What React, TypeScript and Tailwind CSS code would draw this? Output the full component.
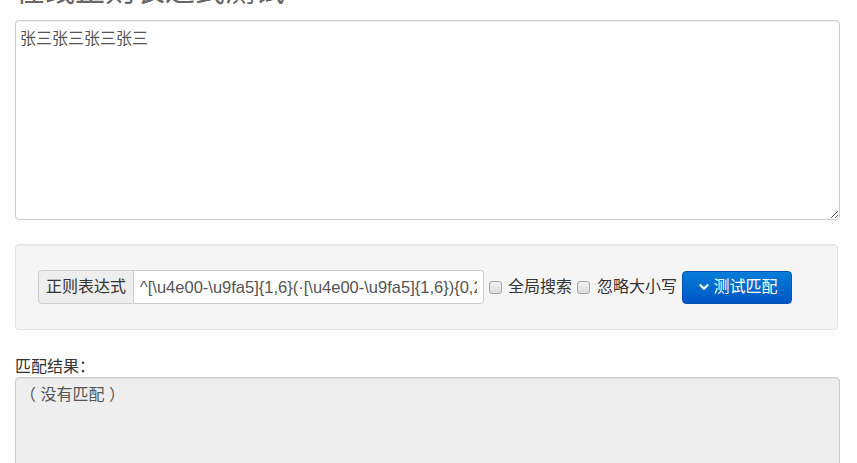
import { ChevronDown } from "lucide-react";

const FONT = "font-['Liberation_Sans','Noto_Sans_CJK_SC',sans-serif]";
const REGEX = "^[\\u4e00-\\u9fa5]{1,6}(·[\\u4e00-\\u9fa5]{1,6}){0,2}$";

function FakeCheckbox() {
  return (
    <span className="inline-block h-[13px] w-[13px] shrink-0 rounded-[3px] border border-[#a3a3a3] bg-gradient-to-b from-[#f0f0f0] to-[#dcdcdc]" />
  );
}

export default function App() {
  return (
    <div className={`${FONT} min-h-screen bg-white px-[15px] text-[16px] text-[#333]`}>
      <h1 className="-mt-[26px] text-[30px] leading-[33px] font-normal text-[#666]">
        在线正则表达式测试
      </h1>

      <textarea
        className="mt-[13px] block h-[200px] w-[825px] rounded-[4px] border border-[#ccc] bg-white px-[4px] pt-[7px] text-[16px] leading-[22px] text-[#555] shadow-[inset_0_1px_1px_rgba(0,0,0,0.075)] outline-none"
        defaultValue="张三张三张三张三"
      />

      <div className="mt-[24px] flex h-[86px] w-[823px] items-center rounded-[4px] border border-[#e3e3e3] bg-[#f5f5f5] pl-[22px] shadow-[inset_0_1px_1px_rgba(0,0,0,0.05)]">
        <div className="flex h-[34px]">
          <span className="flex items-center rounded-l-[4px] border border-[#ccc] bg-[#eee] px-[7px] text-[16px] text-[#333]">
            正则表达式
          </span>
          <input
            className="h-[34px] w-[350px] rounded-r-[4px] border border-l-0 border-[#ccc] bg-white px-[6px] text-[16.5px] text-[#555] outline-none"
            defaultValue={REGEX}
          />
        </div>
        <label className="ml-[5px] flex items-center gap-[6px]">
          <FakeCheckbox />
          <span>全局搜索</span>
        </label>
        <label className="ml-[5px] flex items-center gap-[7px]">
          <FakeCheckbox />
          <span>忽略大小写</span>
        </label>
        <button
          type="button"
          className="ml-[5px] flex h-[33px] w-[110px] items-center justify-center gap-[3px] rounded-[4px] border border-[#0052b4] bg-gradient-to-b from-[#0a7dd8] to-[#0055c6] text-[16px] text-white"
        >
          <ChevronDown className="h-[14px] w-[14px]" strokeWidth={4} />
          测试匹配
        </button>
      </div>

      <div className="mt-[27px] text-[16px] leading-[20px] text-[#333]">匹配结果：</div>
      <div className="h-[120px] w-[825px] rounded-[4px] border border-[#ccc] bg-[#eee] px-[4px] pt-[6px] text-[16px] leading-[22px] text-[#555] shadow-[inset_0_1px_1px_rgba(0,0,0,0.075)]">
        （ 没有匹配 ）
      </div>
    </div>
  );
}
